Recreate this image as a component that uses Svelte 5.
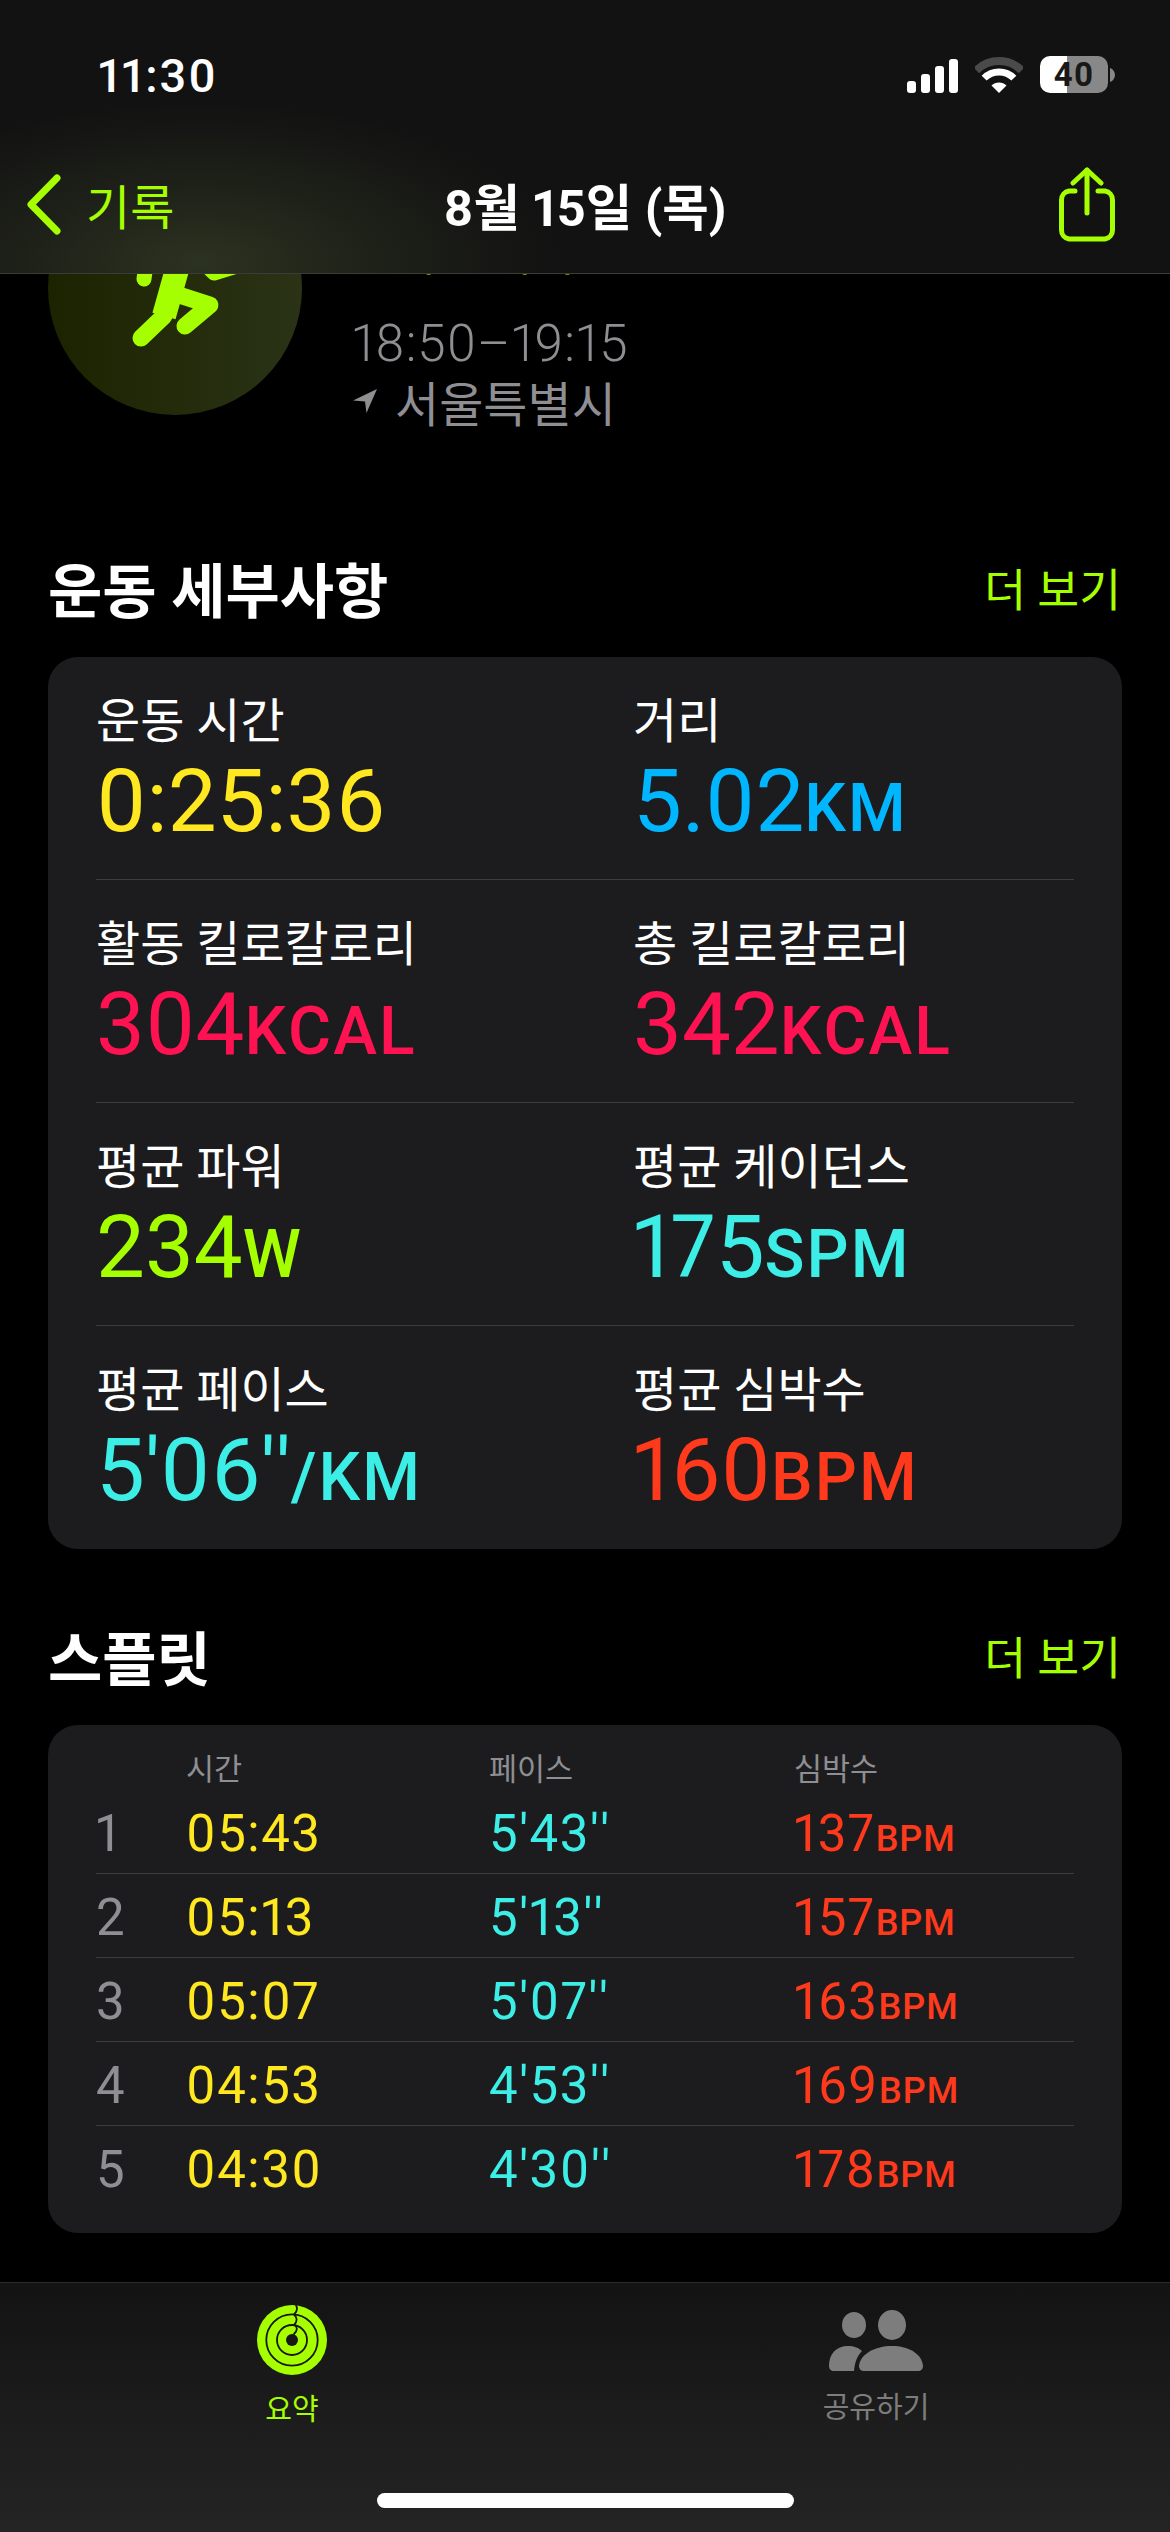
<script>
  // Activity workout summary, scrolled so the header covers the top of the ring
  const metrics = [
    [
      { label: "운동 시간", value: "0:25:36", unit: "", tone: "yellow" },
      { label: "거리", value: "5.02", unit: "KM", tone: "blue" },
    ],
    [
      { label: "활동 킬로칼로리", value: "304", unit: "KCAL", tone: "pink" },
      { label: "총 킬로칼로리", value: "342", unit: "KCAL", tone: "pink" },
    ],
    [
      { label: "평균 파워", value: "234", unit: "W", tone: "lime" },
      { label: "평균 케이던스", value: "175", unit: "SPM", tone: "cyan" },
    ],
    [
      { label: "평균 페이스", value: "5'06''", unit: "/KM", tone: "cyan" },
      { label: "평균 심박수", value: "160", unit: "BPM", tone: "red" },
    ],
  ];

  const splits = [
    { n: 1, time: "05:43", pace: "5'43''", bpm: 137 },
    { n: 2, time: "05:13", pace: "5'13''", bpm: 157 },
    { n: 3, time: "05:07", pace: "5'07''", bpm: 163 },
    { n: 4, time: "04:53", pace: "4'53''", bpm: 169 },
    { n: 5, time: "04:30", pace: "4'30''", bpm: 178 },
  ];
</script>

<div class="page">
  <header class="topbar">
    <div class="status">
      <span class="clock">11:30</span>
      <div class="status-icons">
        <div class="signal"><i></i><i></i><i></i><i></i></div>
        <svg class="wifi" width="48" height="36" viewBox="0 0 48 36">
          <path d="M1.4 13.4A32 32 0 0 1 46.6 13.4" fill="none" stroke="#4a4a4a" stroke-width="8" />
          <path d="M9.15 21.15A21 21 0 0 1 38.85 21.15" fill="none" stroke="#fff" stroke-width="7" />
          <path d="M24 36L16.5 28.5A10.6 10.6 0 0 1 31.5 28.5Z" fill="#fff" />
        </svg>
        <div class="battery">40</div>
        <svg class="nub" width="5" height="14" viewBox="0 0 5 14"><path d="M0 0c3 1 5 4 5 7s-2 6-5 7z" fill="#888" /></svg>
      </div>
    </div>
    <nav class="nav">
      <div class="back">
        <svg width="37" height="61" viewBox="0 0 37 61" fill="none" stroke="#a6ff00" stroke-width="7" stroke-linecap="round" stroke-linejoin="round">
          <path d="M31 4L5 30.5L31 57" />
        </svg>
        <span>기록</span>
      </div>
      <div class="title">8월 15일 (목)</div>
      <div class="share">
        <svg width="60" height="76" viewBox="0 0 60 76" fill="none" stroke="#a6ff00" stroke-width="5" stroke-linecap="round">
          <path d="M18 24H12A9 9 0 0 0 4.500 33V63A9 9 0 0 0 12 72H48A9 9 0 0 0 55.500 63V33A9 9 0 0 0 48 24H41" />
          <path d="M30 46V3" />
          <path d="M16 16L30 3L44 16" stroke-linejoin="round" />
        </svg>
      </div>
    </nav>
  </header>

  <main class="scroll">
    <section class="summary">
      <div class="ring">
        <svg width="254" height="254" viewBox="0 0 254 254" fill="none" stroke="#a6ff00" stroke-linecap="round" stroke-linejoin="round">
          <circle cx="147" cy="62" r="17" fill="#a6ff00" stroke="none" />
          <path d="M93 177L116 155" stroke-width="17" />
          <path d="M116 155L130 105" stroke-width="24" stroke-linecap="butt" />
          <path d="M131 134L162 144L137 165" stroke-width="17" />
          <path d="M96 118L100 88L140 86L166 112L192 104" stroke-width="15" />
        </svg>
      </div>
      <div class="info">
        <div class="kind">실외 달리기</div>
        <div class="when">18:50–19:15</div>
        <div class="where">
          <svg width="26" height="26" viewBox="0 0 26 26"><path d="M25 1L1 12.500L13 13.500L14.500 25Z" fill="#8e8e93" /></svg>
          <span>서울특별시</span>
        </div>
      </div>
    </section>

    <section class="block">
      <div class="block-head">
        <h2>운동 세부사항</h2>
        <span class="more">더 보기</span>
      </div>
      <div class="card metrics">
        {#each metrics as row}
          <div class="metric-row">
            {#each row as m}
              <div class="metric">
                <div class="metric-label">{m.label}</div>
                <div class="metric-value {m.tone}">{m.value}<small>{m.unit}</small></div>
              </div>
            {/each}
          </div>
        {/each}
      </div>
    </section>

    <section class="block splits-block">
      <div class="block-head">
        <h2>스플릿</h2>
        <span class="more">더 보기</span>
      </div>
      <div class="card splits">
        <div class="split-head">
          <span></span><span>시간</span><span>페이스</span><span>심박수</span>
        </div>
        {#each splits as s}
          <div class="split-row">
            <span class="split-n">{s.n}</span>
            <span class="yellow">{s.time}</span>
            <span class="cyan">{s.pace}</span>
            <span class="red">{s.bpm}<small>BPM</small></span>
          </div>
        {/each}
      </div>
    </section>
  </main>

  <footer class="tabbar">
    <div class="tabs">
      <div class="tab tab-on">
        <svg width="72" height="72" viewBox="0 0 72 72" fill="none">
          <circle cx="36" cy="36" r="35" fill="#a6ff00" />
          <circle cx="36" cy="36" r="25.700" stroke="#171717" stroke-width="1.800" />
          <circle cx="36" cy="36" r="15" stroke="#171717" stroke-width="1.800" />
          <circle cx="36" cy="36" r="6" fill="#171717" />
          <path d="M40 1C41.500 4 42 7 38 10.500C41 13 42 17 38 21M38.500 21C41.500 23 42 26 38 30" stroke="#171717" stroke-width="1.800" stroke-linecap="round" />
        </svg>
        <span>요약</span>
      </div>
      <div class="tab">
        <svg width="94" height="62" viewBox="0 0 94 62" fill="#7d7d7d">
          <ellipse cx="25" cy="15" rx="12" ry="13" />
          <ellipse cx="63" cy="15" rx="14" ry="15" />
          <path d="M0 56C0 44 7 36 19 36C25 36 30 38 33 41C28 46 26 52 25 61H5C2 61 0 59 0 56Z" />
          <path d="M30 56C31 44 46 36 63 36C80 36 93 44 94 56C94 59 92 61 89 61H35C32 61 30 59 30 56Z" />
        </svg>
        <span>공유하기</span>
      </div>
    </div>
    <div class="home"></div>
  </footer>
</div>

<style>
  :global(body) {
    margin: 0;
    background: #000;
  }

  .page {
    position: relative;
    display: flex;
    flex-direction: column;
    width: 1170px;
    height: 2532px;
    overflow: hidden;
    background: #000;
    color: #fff;
    font-family: Roboto, "Noto Sans CJK KR", sans-serif;
    font-variant-numeric: proportional-nums;
  }

  .yellow { color: #ffe81f; }
  .blue { color: #00b7ff; }
  .pink { color: #ff1251; }
  .lime { color: #a6ff00; }
  .cyan { color: #3deee6; }
  .red { color: #ff3a1c; }

  .topbar {
    position: absolute;
    top: 0;
    left: 0;
    right: 0;
    z-index: 2;
    height: 273px;
    border-bottom: 1px solid #3a3c35;
    background:
      radial-gradient(ellipse 360px 160px at 200px 262px, #2c3220 0%, rgba(44, 50, 32, 0.45) 50%, rgba(44, 50, 32, 0) 100%),
      #121212;
  }

  .status {
    display: flex;
    align-items: center;
    justify-content: space-between;
    height: 37px;
    padding: 57px 55px 0 98px;
  }

  .clock {
    font-size: 47px;
    font-weight: 500;
    line-height: 37px;
    letter-spacing: 2px;
  }

  .status-icons {
    display: flex;
    align-items: center;
    margin-top: -2px;
  }

  .signal {
    display: flex;
    align-items: flex-end;
    gap: 5px;
    height: 34px;
    margin-top: 2px;
    margin-right: 17px;
  }

  .signal i {
    width: 9px;
    height: 12px;
    border-radius: 3px;
    background: #fff;
  }
  .signal i:nth-child(2) { height: 19px; }
  .signal i:nth-child(3) { height: 27px; }
  .signal i:nth-child(4) { height: 34px; }

  .wifi {
    margin-right: 17px;
  }

  .battery {
    width: 68px;
    height: 37px;
    border-radius: 10px;
    background: linear-gradient(90deg, #fff 27px, #888 27px);
    color: #181818;
    font-size: 33px;
    font-weight: 700;
    line-height: 37px;
    letter-spacing: 1px;
    text-align: center;
  }

  .nub {
    margin-left: 2px;
  }

  .nav {
    display: grid;
    grid-template-columns: 1fr auto 1fr;
    align-items: center;
    height: 80px;
    margin-top: 70px;
    padding: 0 40px;
  }

  .back {
    display: flex;
    align-items: center;
    gap: 23px;
    margin-left: -14px;
    color: #a6ff00;
    font-size: 48px;
  }

  .title {
    font-size: 50.5px;
    font-weight: 700;
  }

  .share {
    display: flex;
    justify-content: flex-end;
    margin-top: 2px;
    margin-right: 13px;
  }

  .scroll {
    flex: 1;
    min-height: 0;
    overflow: hidden;
    padding-top: 161px;
  }

  .summary {
    display: flex;
    gap: 50px;
    padding: 0 48px;
  }

  .ring {
    width: 254px;
    height: 254px;
    border-radius: 50%;
    background: linear-gradient(90deg, #1c2300, #2a3316);
  }

  .info {
    padding-top: 68px;
  }

  .kind {
    height: 40px;
    color: #a6ff00;
    font-size: 46px;
    line-height: 50px;
  }

  .when {
    margin-top: 45px;
    color: #8e8e93;
    font-size: 51px;
    font-weight: 300;
    line-height: 60px;
    letter-spacing: 1px;
  }

  .where {
    display: flex;
    align-items: center;
    gap: 17px;
    height: 60px;
    margin-top: -3px;
    color: #8e8e93;
    font-size: 48px;
  }

  .block {
    padding: 0 48px;
    margin-top: 116px;
  }

  .splits-block {
    margin-top: 66px;
  }

  .block-head {
    display: flex;
    align-items: center;
    justify-content: space-between;
    height: 80px;
    margin-bottom: 30px;
  }

  h2 {
    margin: 0;
    font-size: 59px;
    font-weight: 700;
  }

  .more {
    margin-right: 1px;
    color: #a6ff00;
    font-size: 45.5px;
  }

  .card {
    border-radius: 30px;
    background: #1c1c1e;
  }

  .metrics {
    padding: 0 48px;
  }

  .metric-row {
    display: grid;
    grid-template-columns: 537px 1fr;
    height: 222px;
    border-bottom: 1px solid #3c3c3f;
  }

  .metric-row:last-child {
    border-bottom: 0;
    height: 223px;
  }

  .metric {
    padding-top: 37px;
  }

  .metric-label {
    font-size: 48px;
    line-height: 56px;
  }

  .metric-value {
    margin-top: 6px;
    font-size: 87px;
    line-height: 90px;
    font-kerning: none;
  }

  .metric-value small {
    font-size: 66px;
    font-weight: 500;
    letter-spacing: 2px;
  }

  .splits {
    padding: 0 48px 24px;
  }

  .split-head,
  .split-row {
    display: grid;
    grid-template-columns: 90px 303px 305px 1fr;
  }

  .split-head {
    height: 65px;
    padding-top: 25px;
    box-sizing: border-box;
    color: #8e8e93;
    font-size: 30.5px;
    line-height: 40px;
  }

  .split-row {
    align-items: center;
    height: 80px;
    padding-top: 3px;
    border-bottom: 1px solid #3c3c3f;
    font-size: 51px;
    letter-spacing: 1.5px;
    font-kerning: none;
  }

  .split-row:last-child {
    border-bottom: 0;
  }

  .split-n {
    color: #8e8e93;
  }

  .split-row small {
    font-size: 36px;
    font-weight: 500;
    letter-spacing: 1px;
  }

  .tabbar {
    position: relative;
    flex: none;
    height: 250px;
    box-sizing: border-box;
    border-top: 1px solid #2c2c2c;
    background: linear-gradient(180deg, #131313, #242424);
  }

  .tabs {
    display: flex;
    gap: 384px;
    padding-left: 192px;
  }

  .tab {
    display: flex;
    flex-direction: column;
    align-items: center;
    width: 200px;
    padding-top: 27px;
    color: #7d7d7d;
    font-size: 29px;
  }

  .tab span {
    margin-top: 16px;
    line-height: 40px;
  }

  .tab-on {
    padding-top: 21px;
    color: #a6ff00;
  }

  .tab-on span {
    margin-top: 14px;
  }

  .home {
    position: absolute;
    left: 377px;
    bottom: 24px;
    width: 417px;
    height: 15px;
    border-radius: 8px;
    background: #fff;
  }
</style>
